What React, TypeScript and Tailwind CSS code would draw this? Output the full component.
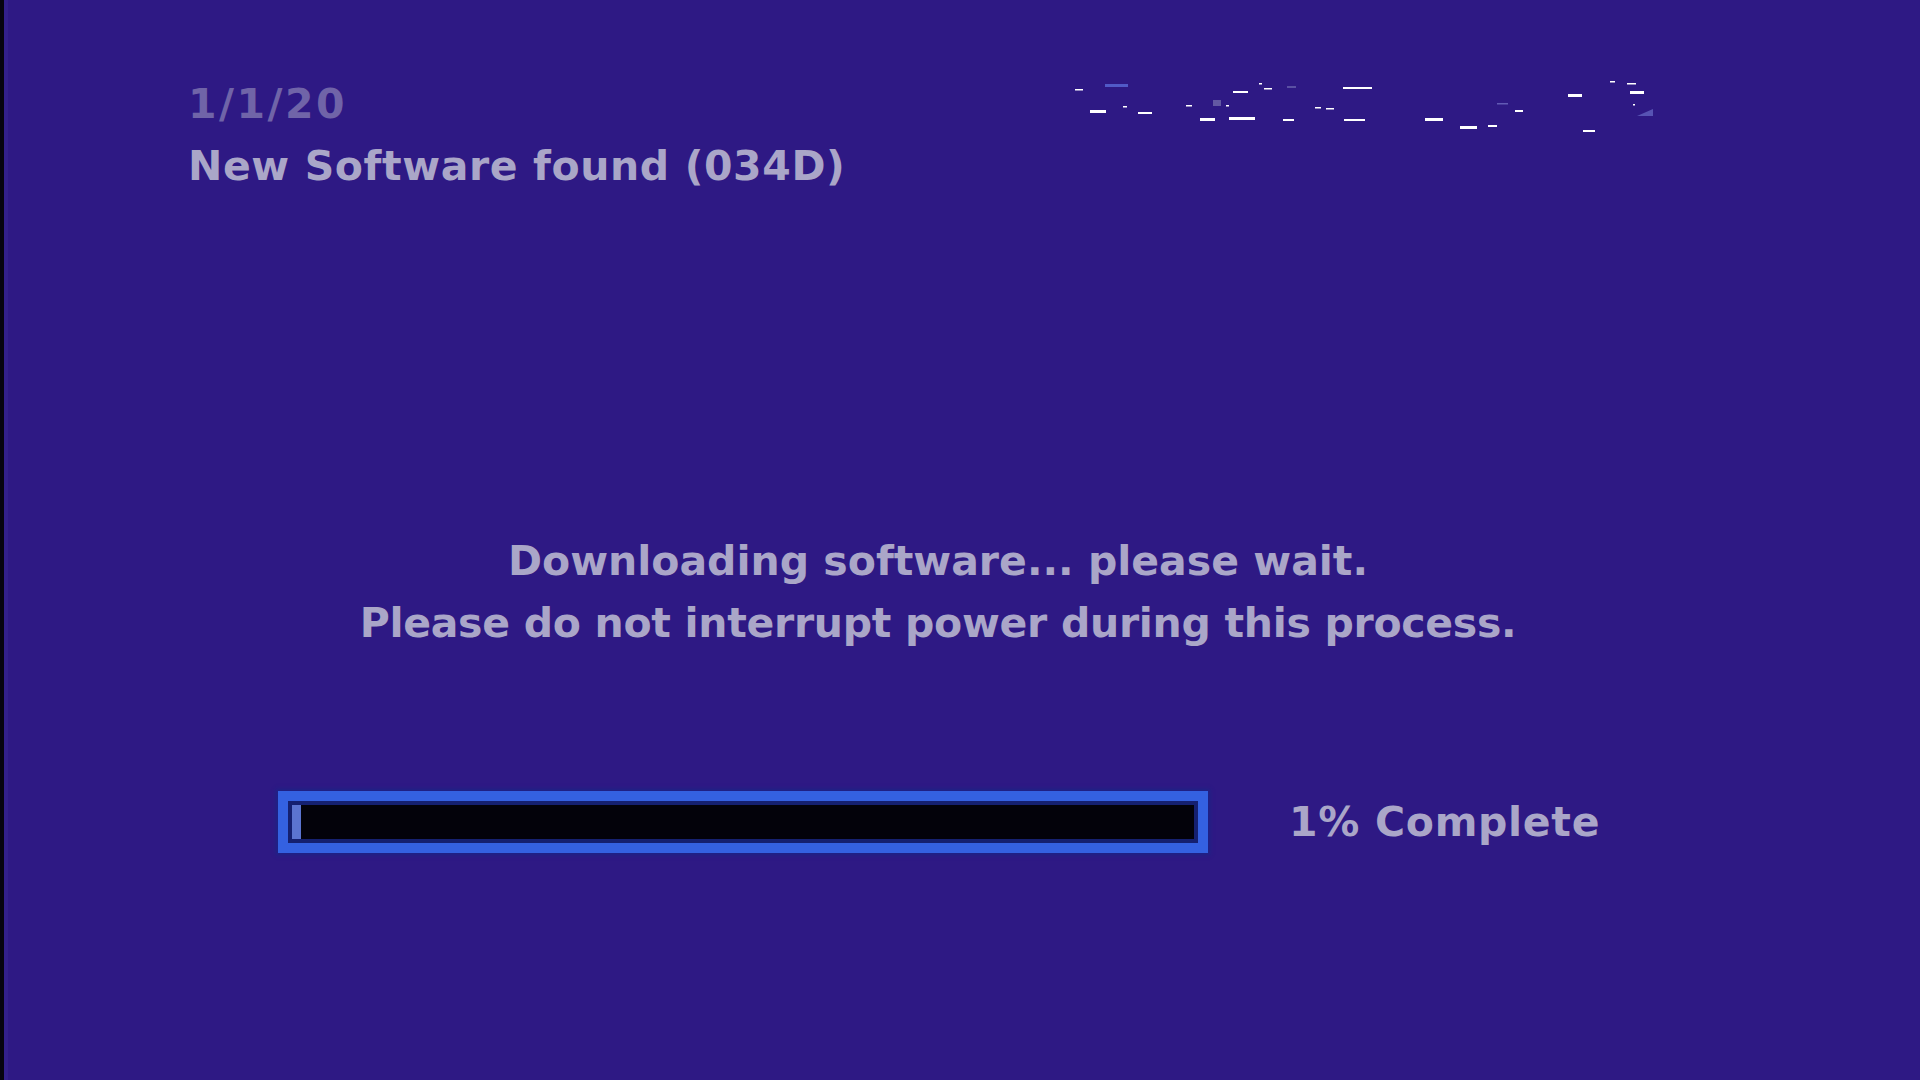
import React from 'react';

const FONT = "font-['DejaVu_Sans','Verdana',sans-serif] font-bold";

// garbled broadcast artifacts in the header's top right
const dashes: [number, number, number, number][] = [
    [15, 23, 16, 1.5], [173, 188, 18, 2], [199, 202, 10, 1.5], [204, 212, 15, 1.5],
    [283, 312, 14, 2], [30, 46, 37, 3], [63, 67, 33, 1.5], [78, 92, 39, 2],
    [126, 132, 32, 1.5], [166, 169, 32, 1.5], [140, 155, 45, 3], [169, 195, 44, 3],
    [223, 234, 46, 2], [255, 261, 34, 1.5], [266, 274, 35, 1.5], [284, 305, 46, 2],
    [365, 383, 45, 3], [400, 417, 53, 3], [428, 437, 52, 2], [455, 463, 37, 2],
    [508, 522, 21, 3], [523, 535, 57, 2], [550, 555, 8, 1.5], [567, 576, 10, 1.5],
    [570, 584, 18, 3], [573, 575, 31, 1.5],
];

const Artifacts: React.FC = () => (
    <svg width="600" height="70" viewBox="0 0 600 70" className="block">
        <rect x="45" y="11" width="23" height="3" fill="#5a6ad8" opacity="0.8" />
        <rect x="153" y="27" width="8" height="6" fill="#7a74b0" opacity="0.7" />
        <rect x="227" y="13" width="9" height="2" fill="#6e68b0" opacity="0.7" />
        <rect x="437" y="30" width="11" height="1.5" fill="#6f6ac0" opacity="0.8" />
        <polygon points="577,43 593,36 593,43" fill="#6a6cc8" opacity="0.7" />
        {dashes.map(([x1, x2, y, h], i) => (
            <rect key={i} x={x1} y={y} width={x2 - x1} height={h} fill="#ffffff" />
        ))}
    </svg>
);

const ProgressBar: React.FC<{ percent: number }> = ({ percent }) => (
    <div className="w-[930px] h-[62px] border-[10px] border-[#3461e1] shadow-[0_0_4px_2px_#1c2486] shrink-0">
        <div className="h-full w-full border-4 border-[#152070] bg-[#03020a]">
            <div className="h-full bg-[#5b74d0]" style={{ width: `${percent}%` }} />
        </div>
    </div>
);

export default function App() {
    return (
        <div className={`h-screen w-full flex bg-[#2e1984] text-[#aaa6c8] ${FONT}`}>
            <div className="w-[4px] bg-[#06040f] shrink-0" />
            <div className="w-[4px] bg-[#33208c] shrink-0" />
            <div className="flex-1 flex flex-col text-[41px] leading-[62px]">
                <div className="flex pt-[73px] pl-[180px]">
                    <div className="w-[872px]">
                        <div className="text-[#7064a8] tracking-[2.5px]">1/1/20</div>
                        <div className="whitespace-nowrap tracking-[0.6px]">New Software found (034D)</div>
                    </div>
                    <Artifacts />
                </div>

                <div className="mt-[333px] pr-[52px] flex flex-col items-center whitespace-nowrap">
                    <div>Downloading software... please wait.</div>
                    <div className="tracking-[-0.3px]">Please do not interrupt power during this process.</div>
                </div>

                <div className="mt-[137px] pl-[270px] flex items-center gap-[81px]">
                    <ProgressBar percent={1} />
                    <div className="whitespace-nowrap tracking-[0.7px]">1% Complete</div>
                </div>
            </div>
        </div>
    );
}
